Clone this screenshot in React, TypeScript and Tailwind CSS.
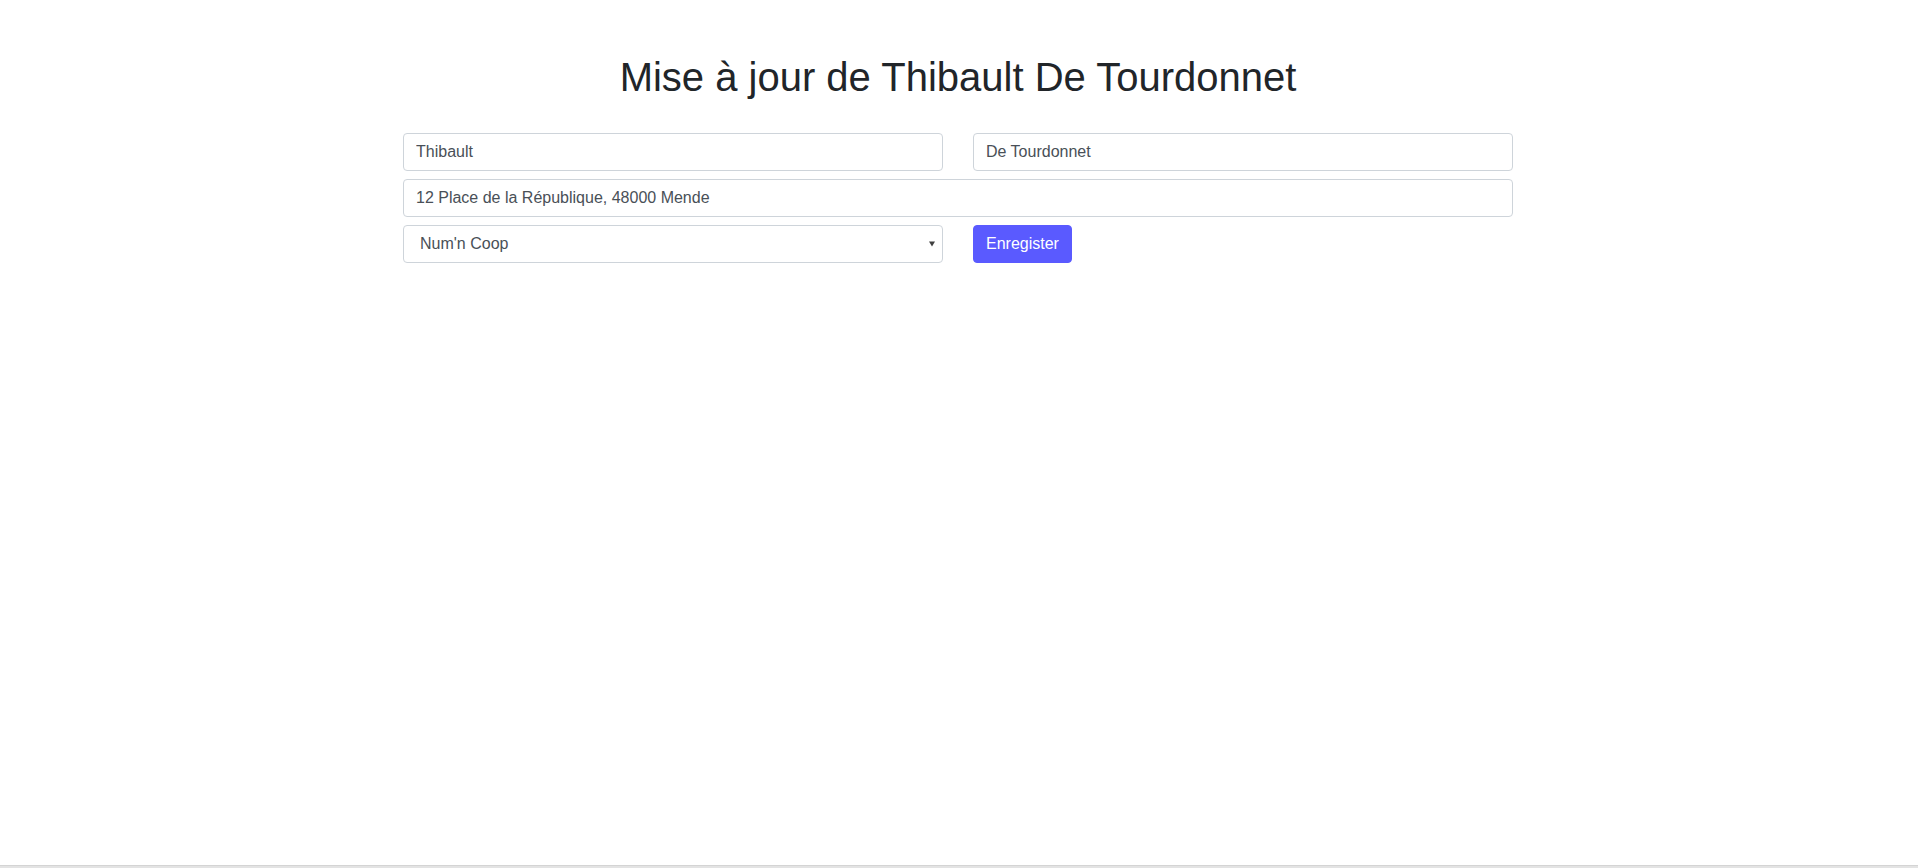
import { useState } from "react";

// --- Mise à jour d'un adhérent ---
export default function App() {
  const [prenom, setPrenom] = useState("Thibault");
  const [nom, setNom] = useState("De Tourdonnet");
  const [adresse, setAdresse] = useState("12 Place de la République, 48000 Mende");
  const [structure, setStructure] = useState("Num'n Coop");

  const inputClass =
    "block w-full h-[38px] px-3 text-base text-[#495057] bg-white border border-[#ced4da] rounded-[4px] outline-none";

  return (
    <div
      className="min-h-screen flex flex-col bg-white"
      style={{ fontFamily: '"Liberation Sans", Arial, sans-serif' }}
    >
      <div className="flex-1">
        <div className="max-w-[1140px] mx-auto pl-[14px] pr-[16px] pt-[53px]">
          <h1 className="text-[40px] leading-[48px] text-center text-[#212529] mb-[32px]">
            Mise à jour de {prenom} {nom}
          </h1>

          <form className="flex flex-col gap-2" onSubmit={(e) => e.preventDefault()}>
            <div className="grid grid-cols-2 gap-[30px]">
              <input className={inputClass} value={prenom} onChange={(e) => setPrenom(e.target.value)} />
              <input className={inputClass} value={nom} onChange={(e) => setNom(e.target.value)} />
            </div>

            <input className={inputClass} value={adresse} onChange={(e) => setAdresse(e.target.value)} />

            <div className="grid grid-cols-2 gap-[30px]">
              <div className="relative">
                <select
                  className={inputClass + " appearance-none pl-4"}
                  value={structure}
                  onChange={(e) => setStructure(e.target.value)}
                >
                  <option>Num'n Coop</option>
                  <option>Autre structure</option>
                </select>
                <svg
                  className="absolute right-[8px] top-[16px] pointer-events-none"
                  width="6"
                  height="6"
                  viewBox="0 0 6 6"
                >
                  <path d="M0 0.5 H6 L3 5.5 Z" fill="#3f3f3f" />
                </svg>
              </div>
              <div>
                <button
                  type="submit"
                  className="h-[38px] px-3 text-base text-white bg-[#5a5aff] border border-[#5a5aff] rounded-[4px]"
                >
                  Enregister
                </button>
              </div>
            </div>
          </form>
        </div>
      </div>
      <div className="h-[3px] bg-[#e3e3e3] border-t border-[#d4d4d4]" />
    </div>
  );
}
